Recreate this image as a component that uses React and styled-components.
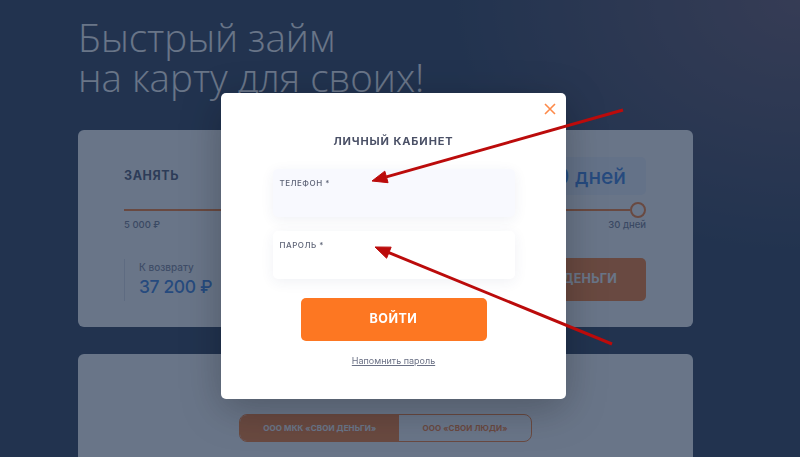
import React from "react";
import styled, { createGlobalStyle } from "styled-components";

const GlobalStyle = createGlobalStyle`
  html, body {
    margin: 0;
    height: 100%;
    overflow: hidden;
  }
  body {
    background: #22334f;
    font-family: Inter, "Open Sans", sans-serif;
  }
`;

const orange = "#fd7722";
const blue = "#2f7be0";

const Page = styled.div`
  min-height: 100vh;
  box-sizing: border-box;
  padding: 18px 0 0 78px;
  background: radial-gradient(ellipse 360px 260px at 100% 0, rgba(112, 86, 102, 0.8), rgba(112, 86, 102, 0) 100%),
    #22334f;
`;

const Headline = styled.h1`
  margin: 0;
  font: 300 38.5px/39.5px "Open Sans", sans-serif;
  color: #fff;
`;

const Card = styled.section`
  width: 615px;
  box-sizing: border-box;
  background: #fff;
  border-radius: 6px;
`;

const CalcCard = styled(Card)`
  margin-top: 33px;
  padding: 27px 47px 26px 46px;
`;

const Sliders = styled.div`
  display: grid;
  grid-template-columns: 1fr 1fr;
  gap: 40px;
`;

const FieldHead = styled.div`
  display: flex;
  align-items: center;
  justify-content: space-between;
  height: 38px;
`;

const FieldLabel = styled.span`
  font: 700 12.5px/1 Inter, sans-serif;
  letter-spacing: 0.6px;
  color: #46506a;
`;

const ValueBox = styled.div`
  height: 38px;
  box-sizing: border-box;
  padding: 0 20px;
  display: flex;
  align-items: center;
  background: #eef4ff;
  border-radius: 5px;
  font: 500 21px/1 Inter, sans-serif;
  color: ${blue};
`;

const Track = styled.div`
  display: flex;
  align-items: center;
  height: 16px;
  margin-top: 7px;
`;

const Line = styled.div`
  height: 2px;
  flex: ${p => (p.$rest ? 1 : "none")};
  background: ${p => (p.$rest ? "#dfe3ec" : orange)};
`;

const Knob = styled.div`
  width: 16px;
  height: 16px;
  box-sizing: border-box;
  border: 2px solid ${orange};
  border-radius: 50%;
  background: #fff;
  flex: none;
`;

const Scale = styled.div`
  display: flex;
  justify-content: space-between;
  margin-top: 1px;
  font: 500 9.5px/12px Inter, sans-serif;
  color: #6f768c;
`;

const Summary = styled.div`
  display: flex;
  justify-content: space-between;
  align-items: center;
  margin-top: 27px;
`;

const Return = styled.div`
  height: 42px;
  border-left: 1px solid #dde1ea;
  padding-left: 14px;
  display: flex;
  flex-direction: column;
  justify-content: center;
  gap: 3px;
`;

const ReturnLabel = styled.span`
  font: 500 10px/12px Inter, sans-serif;
  color: #7d8499;
`;

const ReturnSum = styled.span`
  font: 500 17.5px/22px Inter, sans-serif;
  letter-spacing: -0.4px;
  color: ${blue};
`;

const Submit = styled.button`
  width: 190px;
  height: 43px;
  border: 0;
  border-radius: 5px;
  background: ${orange};
  color: #fff;
  font: 700 12.5px/1 Inter, sans-serif;
  letter-spacing: 0.3px;
`;

const CompanyCard = styled(Card)`
  margin-top: 27px;
  height: 200px;
  padding-top: 60px;
  display: flex;
  justify-content: center;
  align-items: flex-start;
`;

const Tabs = styled.div`
  display: flex;
  border: 1px solid ${orange};
  border-radius: 8px;
  overflow: hidden;
`;

const Tab = styled.button`
  height: 26px;
  padding: 0 23px;
  border: 0;
  background: ${p => (p.$active ? orange : "transparent")};
  color: ${p => (p.$active ? "#fff" : orange)};
  font: 700 8px/1 Inter, sans-serif;
  letter-spacing: 0.1px;
`;

const Overlay = styled.div`
  position: fixed;
  inset: 0;
  background: rgba(34, 51, 79, 0.68);
  padding: 93px 0 0 221px;
`;

const Modal = styled.div`
  position: relative;
  width: 345px;
  box-sizing: border-box;
  padding: 41px 0 32px;
  background: #fff;
  border-radius: 5px;
  box-shadow: 0 10px 40px rgba(0, 0, 0, 0.25);
  display: flex;
  flex-direction: column;
  align-items: center;
`;

const Close = styled.button`
  position: absolute;
  top: 10px;
  right: 10px;
  width: 12px;
  height: 12px;
  padding: 0;
  border: 0;
  background: none;
  display: flex;
`;

const ModalTitle = styled.h2`
  margin: 0;
  font: 700 11px/14px Inter, sans-serif;
  letter-spacing: 0.9px;
  color: #4a5066;
`;

const Form = styled.form`
  display: flex;
  flex-direction: column;
  align-items: center;
  gap: 14px;
  margin-top: 21px;
`;

const InputBox = styled.label`
  width: 242px;
  height: 48px;
  box-sizing: border-box;
  padding: 9px 7px 0;
  display: flex;
  flex-direction: column;
  border-radius: 5px;
  background: ${p => (p.$focused ? "#f8f9fe" : "#fff")};
  box-shadow: 0 3px 14px rgba(40, 60, 120, 0.07);
`;

const InputLabel = styled.span`
  font: 500 8px/10px Inter, sans-serif;
  letter-spacing: 0.5px;
  color: #5d6376;
`;

const Input = styled.input`
  border: 0;
  outline: 0;
  background: transparent;
  padding: 4px 0 0;
  font: 400 12px Inter, sans-serif;
`;

const Login = styled.button`
  width: 186px;
  height: 43px;
  margin-top: 5px;
  border: 0;
  border-radius: 5px;
  background: ${orange};
  color: #fff;
  font: 700 12.5px/1 Inter, sans-serif;
  letter-spacing: 0.5px;
`;

const Remind = styled.a`
  margin-top: 14px;
  font: 400 9px/12px Inter, sans-serif;
  color: #6b7185;
  text-decoration: underline;
`;

const Marks = styled.svg`
  position: fixed;
  left: 0;
  top: 0;
  pointer-events: none;
`;

const Arrow = ({ from, to }) => {
  const dx = to[0] - from[0];
  const dy = to[1] - from[1];
  const len = Math.hypot(dx, dy);
  const ux = dx / len;
  const uy = dy / len;
  const bx = to[0] - ux * 15;
  const by = to[1] - uy * 15;
  const nx = uy * 6;
  const ny = -ux * 6;
  return (
    <g fill="#bb0b0b" stroke="#bb0b0b">
      <line x1={from[0]} y1={from[1]} x2={bx} y2={by} strokeWidth="3" />
      <polygon
        points={`${to[0]},${to[1]} ${bx + nx},${by + ny} ${bx - nx},${by - ny}`}
        strokeWidth="1"
        strokeLinejoin="round"
      />
    </g>
  );
};

const Slider = ({ label, value, min, max, percent }) => (
  <div>
    <FieldHead>
      <FieldLabel>{label}</FieldLabel>
      <ValueBox>{value}</ValueBox>
    </FieldHead>
    <Track>
      <Line style={{ width: `calc((100% - 16px) * ${percent / 100})` }} />
      <Knob />
      <Line $rest />
    </Track>
    <Scale>
      <span>{min}</span>
      <span>{max}</span>
    </Scale>
  </div>
);

export default function App() {
  return (
    <>
      <GlobalStyle />
      <Page>
        <Headline>
          Быстрый займ
          <br />
          на карту для своих!
        </Headline>

        <CalcCard>
          <Sliders>
            <Slider label="ЗАНЯТЬ" value="30 000 ₽" min="5 000 ₽" max="50 000 ₽" percent={55} />
            <Slider label="СРОК" value="30 дней" min="7 дней" max="30 дней" percent={100} />
          </Sliders>
          <Summary>
            <Return>
              <ReturnLabel>К возврату</ReturnLabel>
              <ReturnSum>37 200 ₽</ReturnSum>
            </Return>
            <Submit>ПОЛУЧИТЬ ДЕНЬГИ</Submit>
          </Summary>
        </CalcCard>

        <CompanyCard>
          <Tabs>
            <Tab $active>ООО МКК «СВОИ ДЕНЬГИ»</Tab>
            <Tab>ООО «СВОИ ЛЮДИ»</Tab>
          </Tabs>
        </CompanyCard>
      </Page>

      <Overlay>
        <Modal>
          <Close aria-label="Закрыть">
            <svg width="12" height="12" viewBox="0 0 12 12">
              <path d="M1 1L11 11M11 1L1 11" stroke="#fd8a4a" strokeWidth="1.6" />
            </svg>
          </Close>
          <ModalTitle>ЛИЧНЫЙ КАБИНЕТ</ModalTitle>
          <Form>
            <InputBox $focused>
              <InputLabel>ТЕЛЕФОН *</InputLabel>
              <Input type="tel" />
            </InputBox>
            <InputBox>
              <InputLabel>ПАРОЛЬ *</InputLabel>
              <Input type="password" />
            </InputBox>
            <Login type="button">ВОЙТИ</Login>
          </Form>
          <Remind>Напомнить пароль</Remind>
        </Modal>
      </Overlay>

      <Marks width="800" height="457" viewBox="0 0 800 457">
        <Arrow from={[623, 110]} to={[372, 181]} />
        <Arrow from={[612, 344]} to={[375, 247]} />
      </Marks>
    </>
  );
}
